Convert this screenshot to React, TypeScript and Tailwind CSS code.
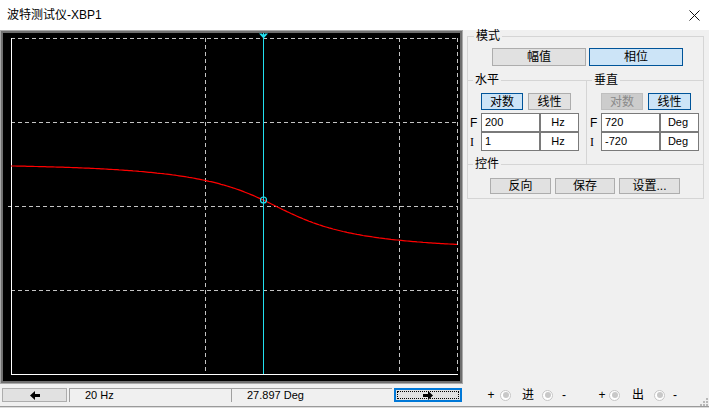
import React from "react";

// Bode plotter window: phase mode, log horizontal 1..200 Hz, linear vertical -720..720 deg
const F0 = 23.45;
const ZETA = 0.646;
const LOG_SPAN = Math.log10(200);

function phaseAt(f: number): number {
  const u = f / F0;
  const th = (Math.atan2(2 * ZETA * u, 1 - u * u) * 180) / Math.PI;
  return 180 - 2 * th;
}

// plot frame in page pixels: x 11..457, y 38..374
const xToFreq = (x: number) => Math.pow(10, ((x - 11) / 446) * LOG_SPAN);
const freqToX = (f: number) => 11 + (446 * Math.log10(f)) / LOG_SPAN;
const phaseToY = (p: number) => 206.5 - (p * 336) / 1440;

const curve = Array.from({ length: 224 }, (_, i) => {
  const x = 11 + i * 2;
  return `${x},${phaseToY(phaseAt(xToFreq(x))).toFixed(1)}`;
}).join(" ");

const cursorX = Math.round(freqToX(20)) + 0.5;
const cursorY = phaseToY(phaseAt(20));

type BtnKind = "normal" | "active" | "disabled";

function Btn({ children, kind = "normal", className = "" }: { children: React.ReactNode; kind?: BtnKind; className?: string }) {
  const look =
    kind === "active"
      ? "border-[#005499] bg-[#cce4f7] text-black"
      : kind === "disabled"
        ? "border-[#bfbfbf] bg-[#cccccc] text-[#8a8a8a]"
        : "border-[#adadad] bg-[#e1e1e1] text-black";
  return (
    <div className={`flex items-center justify-center border text-[12px] leading-none ${look} ${className}`}>
      {children}
    </div>
  );
}

function Cell({ children, className = "" }: { children: React.ReactNode; className?: string }) {
  return (
    <div className={`h-[19px] border border-[#7a7a7a] bg-white text-[11px] leading-[17px] ${className}`}>{children}</div>
  );
}

function RangeInputs({ first, second, unit, labelPad }: { first: string; second: string; unit: string; labelPad: string }) {
  return (
    <div className="mt-[3px] flex flex-col">
      {[
        { tag: "F", value: first },
        { tag: "I", value: second },
      ].map((row) => (
        <div key={row.tag} className="flex items-center">
          <span
            className={`${labelPad} text-[12px] leading-none ${
              row.tag === "I" ? "font-['Liberation_Serif',serif]" : ""
            }`}
          >
            {row.tag}
          </span>
          <Cell className="w-[59px] pl-[3px]">{row.value}</Cell>
          <Cell className="w-[39px] pr-[3px] text-center">{unit}</Cell>
        </div>
      ))}
    </div>
  );
}

function Terminal() {
  return (
    <div className="flex h-[11px] w-[11px] items-center justify-center rounded-full border border-[#c6c6c6] bg-white">
      <div className="h-[6px] w-[6px] rounded-full bg-[#c8c8c8]" />
    </div>
  );
}

function Arrow({ dir }: { dir: "left" | "right" }) {
  return (
    <svg width="10" height="9" viewBox="0 0 10 9" className={dir === "right" ? "scale-x-[-1]" : ""}>
      <polygon points="0,4.5 5,0 5,3 10,3 10,6 5,6 5,9" fill="#000" />
    </svg>
  );
}

export default function App() {
  return (
    <div className="flex h-[408px] w-[709px] flex-col overflow-hidden bg-[#f0f0f0] font-['Liberation_Sans','Noto_Sans_CJK_SC',sans-serif] text-black">
      {/* title bar */}
      <div className="flex h-[30px] items-center justify-between bg-white">
        <span className="pl-[7px] text-[12px]">波特测试仪-XBP1</span>
        <svg width="11" height="11" viewBox="0 0 11 11" className="mr-[9px]">
          <path d="M0.5 0.5 L10.5 10.5 M10.5 0.5 L0.5 10.5" stroke="#111" strokeWidth="1" fill="none" />
        </svg>
      </div>

      <div className="flex">
        {/* plot panel */}
        <div className="w-[463px] border border-[#a9a9a9]">
          <div className="border-2 border-[#6f6f6f] bg-black">
            <svg width={457} height={348} viewBox="3 33 457 348" className="block">
              <g stroke="#c4c4c4" strokeDasharray="4 3" fill="none" shapeRendering="crispEdges">
                <line x1={11} y1={38.5} x2={458} y2={38.5} />
                <line x1={11} y1={122.5} x2={458} y2={122.5} />
                <line x1={8} y1={206.5} x2={458} y2={206.5} />
                <line x1={11} y1={290.5} x2={458} y2={290.5} />
                <line x1={205.5} y1={38} x2={205.5} y2={374} />
                <line x1={399.5} y1={38} x2={399.5} y2={374} />
                <line x1={457.5} y1={38} x2={457.5} y2={374} />
              </g>
              <g stroke="#ffffff" shapeRendering="crispEdges">
                <line x1={11.5} y1={38} x2={11.5} y2={375} />
                <line x1={11} y1={374.5} x2={458} y2={374.5} />
              </g>
              <polyline points={curve} fill="none" stroke="#ff0000" strokeWidth={1.2} />
              <line x1={cursorX} y1={33} x2={cursorX} y2={374} stroke="#22e0f0" strokeWidth={1} shapeRendering="crispEdges" />
              <polygon
                points={`${cursorX - 4.5},33.5 ${cursorX - 1.5},33.5 ${cursorX},35.5 ${cursorX + 1.5},33.5 ${cursorX + 4.5},33.5 ${cursorX},38.5`}
                fill="#22e0f0"
              />
              <circle cx={cursorX} cy={cursorY} r={3} fill="none" stroke="#22e0f0" strokeWidth={1.2} />
            </svg>
          </div>
        </div>

        {/* controls */}
        <fieldset className="ml-[4px] h-[169px] w-[237px] border border-[#d5d5d5]">
          <legend className="ml-[6px] px-[2px] text-[12px] leading-[12px]">模式</legend>
          <div className="flex gap-[3px] pl-[24px] pt-[6px]">
            <Btn className="h-[18px] w-[94px]">幅值</Btn>
            <Btn kind="active" className="h-[18px] w-[94px]">相位</Btn>
          </div>

          <div className="mt-[8px] flex">
            <fieldset className="w-[119px] border-r border-t border-[#d5d5d5] pb-[13px]">
              <legend className="ml-[5px] px-[2px] text-[12px] leading-[12px]">水平</legend>
              <div className="flex gap-[5px] pl-[13px] pt-[7px]">
                <Btn kind="active" className="h-[17px] w-[42px]">对数</Btn>
                <Btn className="h-[17px] w-[43px]">线性</Btn>
              </div>
              <RangeInputs first="200" second="1" unit="Hz" labelPad="w-[13px] pl-[2px]" />
            </fieldset>
            <fieldset className="flex-1 border-t border-[#d5d5d5] pb-[13px]">
              <legend className="ml-[5px] px-[2px] text-[12px] leading-[12px]">垂直</legend>
              <div className="flex gap-[5px] pl-[14px] pt-[7px]">
                <Btn kind="disabled" className="h-[17px] w-[42px]">对数</Btn>
                <Btn kind="active" className="h-[17px] w-[43px]">线性</Btn>
              </div>
              <RangeInputs first="720" second="-720" unit="Deg" labelPad="w-[14px] pl-[3px]" />
            </fieldset>
          </div>

          <fieldset className="-mt-[6px] border-t border-[#d5d5d5]">
            <legend className="ml-[5px] px-[2px] text-[12px] leading-[12px]">控件</legend>
            <div className="flex gap-[4px] pl-[22px] pt-[8px]">
              <Btn className="h-[16px] w-[61px]">反向</Btn>
              <Btn className="h-[16px] w-[60px]">保存</Btn>
              <Btn className="h-[16px] w-[61px]">设置...</Btn>
            </div>
          </fieldset>
        </fieldset>
      </div>

      {/* bottom bar */}
      <div className="flex h-[22px] items-start pt-[4px]">
        <div className="ml-[2px] flex h-[14px] w-[65px] items-center justify-center border border-[#adadad] bg-[#e1e1e1]">
          <Arrow dir="left" />
        </div>
        <div className="ml-[2px] flex h-[14px] w-[162px] items-center border-l border-t border-[#a0a0a0] pl-[15px] text-[11px]">
          20 Hz
        </div>
        <div className="flex h-[14px] w-[161px] items-center border-l border-t border-[#a0a0a0] pl-[15px] text-[11px]">
          27.897 Deg
        </div>
        <div className="ml-[2px] h-[14px] w-[68px] border-2 border-[#0078d7] bg-[#e1e1e1] p-px">
          <div className="flex h-full w-full items-center justify-center border border-dotted border-black">
            <Arrow dir="right" />
          </div>
        </div>

        <div className="flex h-[14px] items-center text-[12px] leading-none">
          <span className="ml-[25px] w-[8px] text-center">+</span>
          <div className="ml-[5px]"><Terminal /></div>
          <span className="ml-[10px] w-[14px] text-center">进</span>
          <div className="ml-[7px]"><Terminal /></div>
          <span className="ml-[7px] w-[8px] text-center">-</span>

          <span className="ml-[30px] w-[8px] text-center">+</span>
          <div className="ml-[3px]"><Terminal /></div>
          <span className="ml-[11px] w-[14px] text-center">出</span>
          <div className="ml-[9px]"><Terminal /></div>
          <span className="ml-[6px] w-[8px] text-center">-</span>
        </div>

        <svg width="10" height="10" viewBox="0 0 10 10" className="ml-auto mr-px self-end">
          {[
            [8, 2], [5, 5], [8, 5], [2, 8], [5, 8], [8, 8],
          ].map(([x, y]) => (
            <rect key={`${x}-${y}`} x={x} y={y} width="2" height="2" fill="#b8b8b8" />
          ))}
        </svg>
      </div>
      <div className="h-px bg-[#9a9a9a]" />
      <div className="h-px bg-[#dcdcdc]" />
    </div>
  );
}
